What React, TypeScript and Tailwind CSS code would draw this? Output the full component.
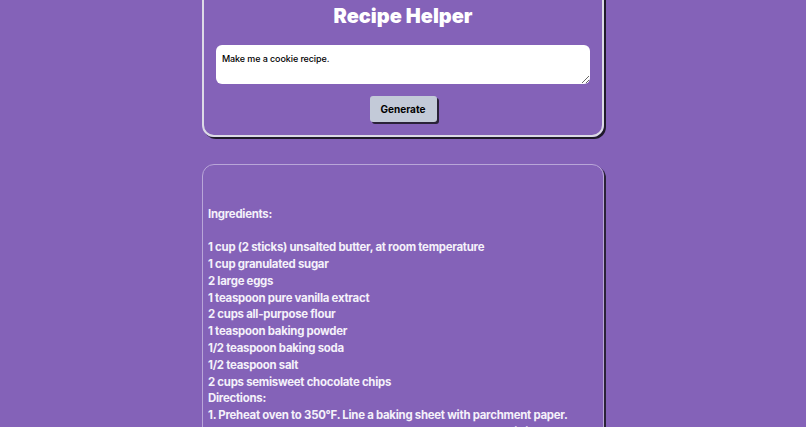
const recipe = `

Ingredients:

1 cup (2 sticks) unsalted butter, at room temperature
1 cup granulated sugar
2 large eggs
1 teaspoon pure vanilla extract
2 cups all-purpose flour
1 teaspoon baking powder
1/2 teaspoon baking soda
1/2 teaspoon salt
2 cups semisweet chocolate chips
Directions:
1. Preheat oven to 350°F. Line a baking sheet with parchment paper.
2. In a large bowl, cream together the butter and sugar until light and fluffy. Beat in the eggs one at a time.`;

export default function App() {
  return (
    <div className="h-[427px] overflow-hidden bg-[#8462b8] font-['Inter',sans-serif]">
      <div className="w-[402px] mx-auto -mt-[22px]">
        {/* Prompt card */}
        <div className="border-2 border-[#dcdae6] rounded-[12px] shadow-[2px_2px_0_#1f1a2b] px-[12px] pt-[21px] pb-[13px]">
          <h1 className="text-center text-white text-[20px] font-black leading-[30px]">
            Recipe Helper
          </h1>
          <textarea
            className="mt-[14px] block w-full h-[39px] bg-white rounded-[6px] px-[6px] py-[8px] text-[9px] leading-[12px] font-medium tracking-[-0.1px] text-black resize-y outline-none"
            defaultValue="Make me a cookie recipe."
          />
          <div className="flex justify-center mt-[12px]">
            <button className="w-[67px] h-[26px] rounded-[3px] bg-[#c3cad8] text-[10px] font-bold text-black shadow-[2px_2px_0_#2a2238]">
              Generate
            </button>
          </div>
        </div>

        {/* Result card */}
        <div className="mt-[27px] border border-[#b9a6d8] rounded-[12px] shadow-[2px_2px_0_#2a2238] px-[5px] pt-[7px] pb-[20px]">
          <div className="whitespace-pre-wrap text-[11.4px] leading-[16.8px] font-bold tracking-[-0.25px] text-[#f4f1fa]">
            {recipe}
          </div>
        </div>
      </div>
    </div>
  );
}
